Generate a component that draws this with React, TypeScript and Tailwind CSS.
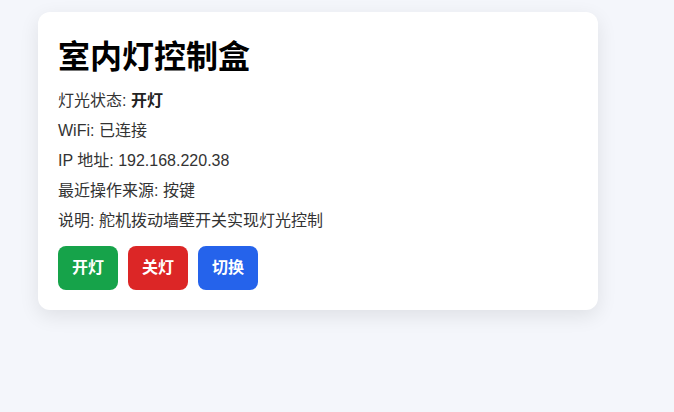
export default function App() {
  const rows: [string, string][] = [
    ['WiFi: ', '已连接'],
    ['IP 地址: ', '192.168.220.38'],
    ['最近操作来源: ', '按键'],
    ['说明: ', '舵机拨动墙壁开关实现灯光控制'],
  ];

  return (
    <div
      className="min-h-screen bg-[#f4f6fb] pt-3 pl-[38px] text-[#333]"
      style={{ fontFamily: '"Liberation Sans", "Noto Sans CJK SC", sans-serif' }}
    >
      <div className="w-[560px] rounded-xl bg-white px-5 pt-[23px] pb-5 shadow-[0_6px_20px_rgba(0,0,0,0.09)]">
        <h1 className="mb-[10px] text-[32px] font-bold leading-[44px] text-black">室内灯控制盒</h1>
        <p className="my-[6px] text-base leading-6">
          灯光状态: <b className="font-bold text-[#222]">开灯</b>
        </p>
        {rows.map(([k, v]) => (
          <p key={k} className="my-[6px] text-base leading-6">
            {k}
            {v}
          </p>
        ))}
        <div className="mt-[13px] flex gap-[10px]">
          <button className="h-[44px] w-[60px] rounded-lg bg-[#16a34a] text-base font-bold text-white">开灯</button>
          <button className="h-[44px] w-[60px] rounded-lg bg-[#dc2626] text-base font-bold text-white">关灯</button>
          <button className="h-[44px] w-[60px] rounded-lg bg-[#2563eb] text-base font-bold text-white">切换</button>
        </div>
      </div>
    </div>
  );
}
